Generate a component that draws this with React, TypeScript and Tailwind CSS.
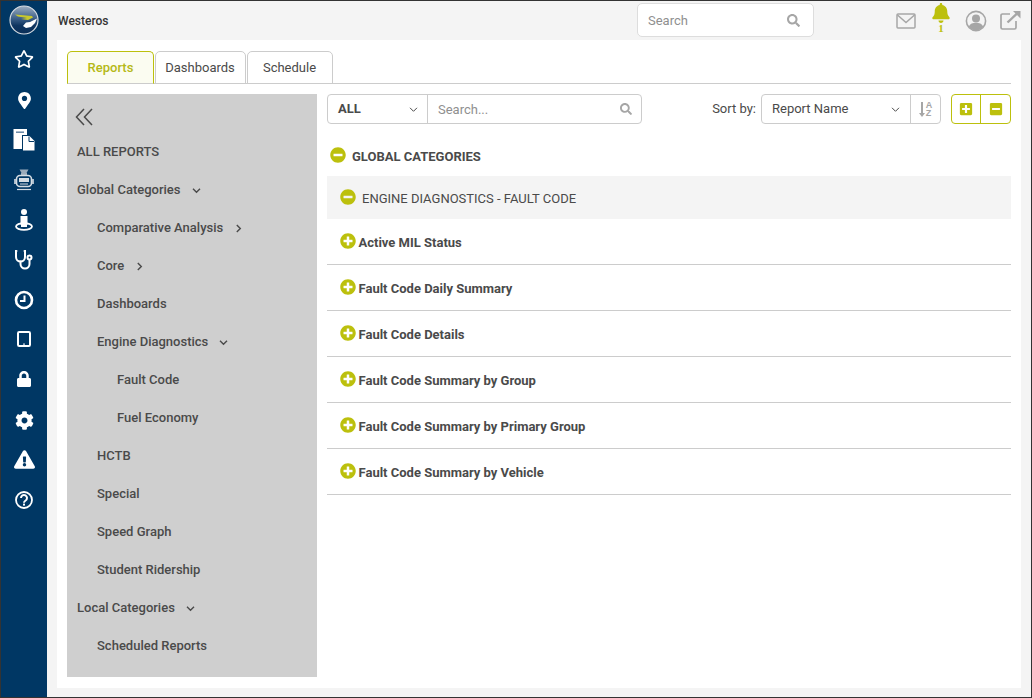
import React from "react";
import { FaRegStar, FaMapMarkerAlt, FaLock, FaCog, FaExclamationTriangle, FaBell, FaPlusCircle, FaMinusCircle, FaPlusSquare, FaMinusSquare, FaSearch } from "react-icons/fa";

const Logo = () => (
  <svg width="30" height="30" viewBox="0 0 30 30">
    <defs>
      <linearGradient id="g" x1="0" y1="0" x2="0" y2="1">
        <stop offset="0" stopColor="#9fb0c2" />
        <stop offset="0.45" stopColor="#3c5f88" />
        <stop offset="0.7" stopColor="#0f3560" />
        <stop offset="1" stopColor="#0b2f58" />
      </linearGradient>
    </defs>
    <circle cx="15" cy="15" r="14" fill="url(#g)" stroke="#d7dde3" strokeWidth="1.2" />
    <path d="M14 21 L17 17.5 L21 17 L28 13.5 L26 18 L22 22 L17 23Z" fill="#fff" />
    <path d="M6 9.5 L23 11 L24 12.5 L19 15 L12 14 L18 13 L9 11.5Z" fill="#c9c92c" />
  </svg>
);

const Docs = () => (
  <svg width="22" height="22" viewBox="0 0 22 22" fill="#fff">
    <path d="M0.5 0h13.5v6H9v14H0.5z" />
    <rect x="3" y="2.5" width="8" height="1.4" fill="#5d7f9f" />
    <path d="M10 7h6.5l5 5v9.5H10z" />
    <path d="M16 7.5v5h5" fill="none" stroke="#003764" strokeWidth="1" />
  </svg>
);

const Bus = () => (
  <svg width="20" height="22" viewBox="0 0 20 22" fill="none" stroke="#d5dde4">
    <path d="M5.5 0.5h9L12.5 4h-5z" fill="#9aabbb" stroke="none" />
    <rect x="7" y="4" width="6" height="2" fill="#9aabbb" stroke="none" />
    <rect x="2.5" y="6.5" width="15" height="11" rx="3.5" strokeWidth="1.6" />
    <rect x="5" y="9" width="10" height="4" fill="#d5dde4" stroke="none" />
    <path d="M6 15h8" strokeWidth="1" />
    <path d="M1 10v5M19 10v5" strokeWidth="1.6" />
    <path d="M3 20.5h14" strokeWidth="1.2" />
  </svg>
);

const Person = () => (
  <svg width="20" height="22" viewBox="0 0 20 22" fill="#fff">
    <circle cx="10" cy="3" r="3" />
    <path d="M6.5 7h7v9h-7z" />
    <ellipse cx="10" cy="17.5" rx="8" ry="3.4" fill="none" stroke="#fff" strokeWidth="1.8" />
    <path d="M7 16h6v2H7z" />
  </svg>
);

const Steth = () => (
  <svg width="20" height="22" viewBox="0 0 20 22" fill="none" stroke="#fff" strokeWidth="2" strokeLinecap="round">
    <path d="M2.5 2H2v6a4.5 4.5 0 0 0 9 0V2h-.5" />
    <path d="M6.5 12.5V15a4.5 4.5 0 0 0 9 0v-4" />
    <circle cx="15.5" cy="8.5" r="2" />
  </svg>
);

const Clock = () => (
  <svg width="20" height="20" viewBox="0 0 20 20" fill="none" stroke="#fff">
    <circle cx="10" cy="10" r="8" strokeWidth="2.6" />
    <path d="M10.5 5.5v5.5H6" strokeWidth="2" />
  </svg>
);

const Tablet = () => (
  <svg width="14" height="16" viewBox="0 0 14 16" fill="none" stroke="#fff">
    <rect x="1" y="1" width="12" height="14" rx="1.2" strokeWidth="2" />
    <rect x="6" y="12.6" width="2" height="1" fill="#fff" stroke="none" />
  </svg>
);

const Help = () => (
  <svg width="20" height="20" viewBox="0 0 20 20" fill="none" stroke="#fff">
    <circle cx="10" cy="10" r="8" strokeWidth="1.8" />
    <path d="M7 8a3 3 0 1 1 4.6 2.5c-1 .6-1.6 1-1.6 2.2" strokeWidth="2" />
    <rect x="9" y="13.6" width="2" height="2" fill="#fff" stroke="none" />
  </svg>
);

const Mail = () => (
  <svg width="20" height="16" viewBox="0 0 20 16" fill="none" stroke="#a6a6a6" strokeWidth="1.5">
    <rect x="1" y="1" width="18" height="14" rx="1" />
    <path d="M1.5 2 10 9.5 18.5 2" />
  </svg>
);

const User = () => (
  <svg width="22" height="22" viewBox="0 0 22 22">
    <circle cx="11" cy="11" r="9.6" fill="none" stroke="#a6a6a6" strokeWidth="1.6" />
    <circle cx="11" cy="8.5" r="4" fill="#a6a6a6" />
    <path d="M3.8 16.5c1.2-3 4-3.8 7.2-3.8s6 .8 7.2 3.8A9.6 9.6 0 0 1 11 20.5a9.6 9.6 0 0 1-7.2-4z" fill="#a6a6a6" />
  </svg>
);

const External = () => (
  <svg width="21" height="20" viewBox="0 0 21 20" fill="none" stroke="#a6a6a6">
    <path d="M10 4H2.5A1.5 1.5 0 0 0 1 5.5v12A1.5 1.5 0 0 0 2.5 19h12a1.5 1.5 0 0 0 1.5-1.5V11" strokeWidth="1.7" />
    <path d="M7.5 12.5 18 2.5" strokeWidth="2.4" />
    <path d="M13 1h7.5v7.5z" fill="#a6a6a6" stroke="none" />
  </svg>
);

const Chevron = ({ dir = "down", className = "", weight = 1.4 }: { dir?: "down" | "right"; className?: string; weight?: number }) => (
  <svg width="9" height="9" viewBox="0 0 9 9" fill="none" stroke="#4a4a4a" strokeWidth={weight} className={className}>
    {dir === "down" ? <path d="M1 2.8 4.5 6.3 8 2.8" /> : <path d="M2.8 1 6.3 4.5 2.8 8" />}
  </svg>
);

const SortAz = () => (
  <div className="flex items-center gap-[1px] text-[#a6a6a6]">
    <svg width="6" height="15" viewBox="0 0 6 15" fill="#a6a6a6">
      <path d="M2 0h2v11h2l-3 4-3-4h2z" />
    </svg>
    <div className="flex flex-col text-[9px] leading-[8px] font-bold font-['Liberation_Sans',sans-serif]">
      <span>A</span>
      <span>Z</span>
    </div>
  </div>
);

const railIcons = [
  <FaRegStar key="s" size={20} color="#fff" />,
  <FaMapMarkerAlt key="m" size={17} color="#fff" />,
  <Docs key="d" />,
  <Bus key="b" />,
  <Person key="p" />,
  <Steth key="st" />,
  <Clock key="c" />,
  <Tablet key="t" />,
  <FaLock key="l" size={16} color="#fff" />,
  <FaCog key="g" size={19} color="#fff" />,
  <FaExclamationTriangle key="e" size={21} color="#fff" />,
  <Help key="h" />,
];

const railRowClass = [
  "",
  "mt-[1px]",
  "",
  "",
  "",
  "",
  "",
  "pb-[2px]",
  "pb-[2px]",
  "",
  "pb-[2px]",
  "",
];

type Nav = { label: string; indent: number; caret?: "down" | "right" };
const nav: Nav[] = [
  { label: "ALL REPORTS", indent: 0 },
  { label: "Global Categories", indent: 0, caret: "down" },
  { label: "Comparative Analysis", indent: 1, caret: "right" },
  { label: "Core", indent: 1, caret: "right" },
  { label: "Dashboards", indent: 1 },
  { label: "Engine Diagnostics", indent: 1, caret: "down" },
  { label: "Fault Code", indent: 2 },
  { label: "Fuel Economy", indent: 2 },
  { label: "HCTB", indent: 1 },
  { label: "Special", indent: 1 },
  { label: "Speed Graph", indent: 1 },
  { label: "Student Ridership", indent: 1 },
  { label: "Local Categories", indent: 0, caret: "down" },
  { label: "Scheduled Reports", indent: 1 },
];

const reports = [
  "Active MIL Status",
  "Fault Code Daily Summary",
  "Fault Code Details",
  "Fault Code Summary by Group",
  "Fault Code Summary by Primary Group",
  "Fault Code Summary by Vehicle",
];

const indentClass = ["pl-[10px]", "pl-[30px]", "pl-[50px]"];

export default function App() {
  return (
    <div className="w-[1032px] h-[698px] border border-[#333] flex overflow-hidden font-['Roboto',sans-serif] text-[#4a4a4a] bg-[#f4f4f4] text-[13px]">
      <aside className="w-[46px] shrink-0 bg-[#003764] flex flex-col items-center">
        <div className="h-[38px] flex items-center justify-center">
          <Logo />
        </div>
        {railIcons.map((ic, i) => (
          <div key={i} className={`h-[40px] flex items-center justify-center w-full ${railRowClass[i]}`}>
            {ic}
          </div>
        ))}
      </aside>
      <div className="flex-1 min-w-0 flex flex-col">
        <header className="h-[39px] shrink-0 flex items-center pl-[11px]">
          <span className="font-medium text-[12px] text-[#333] w-[579px]">Westeros</span>
          <div className="w-[177px] h-[34px] -mt-[1px] bg-white border border-[#ddd] rounded-[5px] flex items-center justify-between pl-[10px] pr-[13px] text-[#8f8f8f]">
            <span className="text-[13px] pt-[2px]">Search</span>
            <FaSearch size={13} color="#a6a6a6" />
          </div>
          <div className="ml-[82px] w-[20px] flex justify-center"><Mail /></div>
          <div className="ml-[15px] flex flex-col items-center w-[20px] -mt-[5px]">
            <FaBell size={20} color="#bcc00d" />
            <span className="text-[11px] leading-[11px] font-bold text-[#bcc00d] font-['Liberation_Serif',serif]">1</span>
          </div>
          <div className="ml-[14px]"><User /></div>
          <div className="ml-[13px] -mt-[1px]"><External /></div>
        </header>
        <div className="flex-1 min-h-0 flex pl-[10px] pr-[10px] pb-[9px]">
          <main className="flex-1 min-w-0 bg-white px-[10px] pt-[11px] pb-[11px] flex flex-col">
            <div className="flex h-[33px] shrink-0 border-b border-[#ccc] gap-[1px] text-[13px]">
              <div className="w-[87px] h-[33px] border border-[#bcc00d] border-b-[#ccc] rounded-t-[5px] bg-[#fbfcf1] flex items-center justify-center font-medium text-[#b5b916]">Reports</div>
              <div className="w-[91px] h-[33px] border border-[#ccc] rounded-t-[5px] flex items-center justify-center pr-[1px]">Dashboards</div>
              <div className="w-[86px] h-[33px] border border-[#ccc] rounded-t-[5px] flex items-center justify-center pr-[1px]">Schedule</div>
            </div>
            <div className="flex-1 min-h-0 flex mt-[10px] gap-[10px]">
              <nav className="w-[250px] shrink-0 bg-[#cfcfcf] font-medium text-[13px]">
                <div className="h-[39px] pl-[8px] pt-[14px]">
                  <svg width="20" height="18" viewBox="0 0 20 18" fill="none" stroke="#4a4a4a" strokeWidth="1.5">
                    <path d="M9 1 1.5 9 9 17M17 1 9.5 9l7.5 8" />
                  </svg>
                </div>
                {nav.map((n) => (
                  <div key={n.label} className={`h-[38px] flex items-center ${indentClass[n.indent]}`}>
                    <span>{n.label}</span>
                    {n.caret === "down" && <Chevron dir="down" className="ml-[11px] mt-[1px]" />}
                    {n.caret === "right" && <Chevron dir="right" className="ml-[11px] mt-[1px]" />}
                  </div>
                ))}
              </nav>
              <section className="flex-1 min-w-0 flex flex-col">
                <div className="flex items-center h-[30px] shrink-0">
                  <div className="w-[315px] h-[30px] border border-[#ccc] rounded-[4px] flex items-center">
                    <div className="w-[100px] h-full flex items-center justify-between pl-[10px] pr-[9px] border-r border-[#ccc] font-bold text-[13px]">
                      <span>ALL</span>
                      <Chevron dir="down" weight={1} />
                    </div>
                    <div className="flex-1 flex items-center justify-between pl-[10px] pr-[9px] text-[#8f8f8f]">
                      <span className="text-[13px] pt-[1px]">Search...</span>
                      <FaSearch size={12} color="#a6a6a6" />
                    </div>
                  </div>
                  <span className="ml-auto mr-[5px] text-[13px] -mt-[1px]">Sort by:</span>
                  <div className="w-[180px] h-[30px] border border-[#ccc] rounded-[4px] flex items-center">
                    <div className="w-[149px] h-full flex items-center justify-between pl-[10px] pr-[10px] border-r border-[#ccc]">
                      <span>Report Name</span>
                      <Chevron dir="down" weight={1} />
                    </div>
                    <div className="flex-1 flex items-center justify-center"><SortAz /></div>
                  </div>
                  <div className="ml-[10px] w-[60px] h-[30px] border border-[#bcc00d] rounded-[4px] flex items-center">
                    <div className="w-[29px] h-full flex items-center justify-center border-r border-[#bcc00d]"><FaPlusSquare size={14} color="#bcc00d" /></div>
                    <div className="flex-1 flex items-center justify-center"><FaMinusSquare size={14} color="#bcc00d" /></div>
                  </div>
                </div>
                <div className="h-[52px] shrink-0 flex items-center pl-[3px] gap-[6px] pt-[13px] font-bold text-[13px]">
                  <FaMinusCircle size={16} color="#bcc00d" className="-mt-[3px]" />
                  <span>GLOBAL CATEGORIES</span>
                </div>
                <div className="h-[43px] shrink-0 bg-[#f4f4f4] flex items-center pl-[13px] pt-[2px] gap-[6px]">
                  <FaMinusCircle size={16} color="#bcc00d" className="-mt-[3px]" />
                  <span>ENGINE DIAGNOSTICS - FAULT CODE</span>
                </div>
                {reports.map((r) => (
                  <div key={r} className="h-[46px] shrink-0 border-b border-[#ccc] flex items-center pl-[13px] pt-[2px] gap-[2.5px] font-bold text-[13px]">
                    <FaPlusCircle size={16} color="#bcc00d" className="-mt-[4px]" />
                    <span>{r}</span>
                  </div>
                ))}
              </section>
            </div>
          </main>
        </div>
      </div>
    </div>
  );
}
